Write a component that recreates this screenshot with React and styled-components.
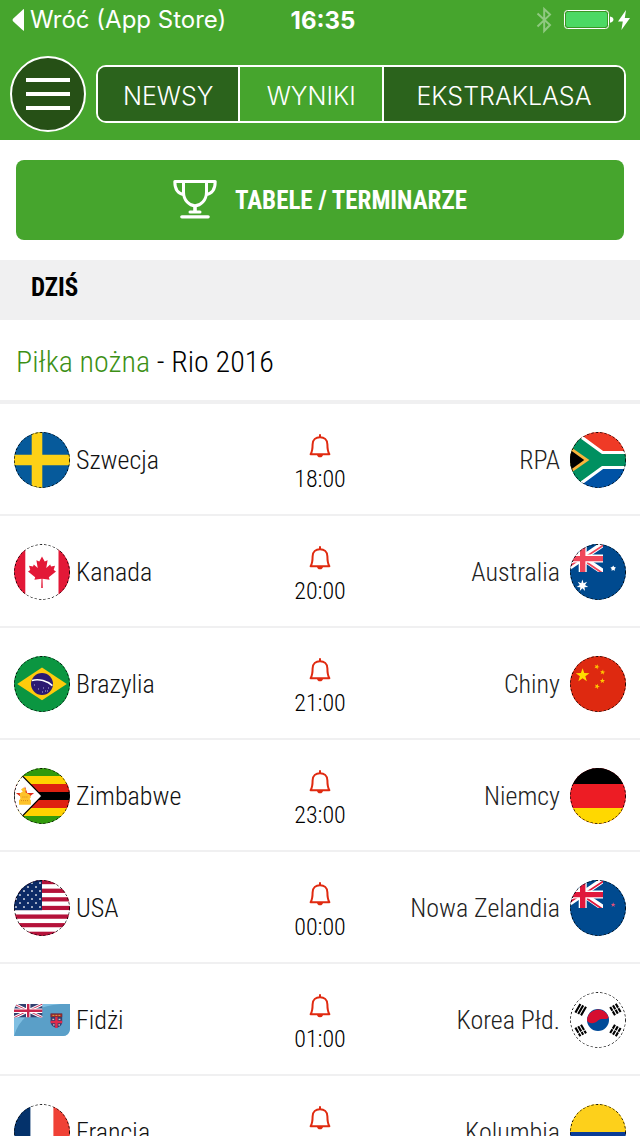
import { useState } from "react"
import styled, { createGlobalStyle } from "styled-components"

const GlobalStyle = createGlobalStyle`
    * {
        box-sizing: border-box;
    }

    body {
        margin: 0;
        background-color: #ffffff;
        color: #000000;
        font-family: "Roboto Condensed", Roboto, sans-serif;
        font-weight: 300;
    }

    button {
        padding: 0;
        border: none;
        background: none;
        font: inherit;
        color: inherit;
        cursor: pointer;
    }
`

const TopBar = styled.header`
    background-color: #46a52d;
    color: white;
    font-family: Inter, sans-serif;
    height: 140px;
`

const StatusBar = styled.div`
    display: grid;
    grid-template-columns: 1fr auto 1fr;
    align-items: center;
    height: 40px;
    padding: 0 10px 0 12px;
    font-size: 24px;
    line-height: 40px;
`

const BackLink = styled.a`
    display: flex;
    align-items: center;
    gap: 6px;
    color: white;
    text-decoration: none;
    font-weight: 400;
`

const Clock = styled.time`
    padding: 2px 0 0 4px;
    font-weight: 700;
    line-height: 38px;
`

const StatusIcons = styled.div`
    display: flex;
    justify-content: flex-end;
    align-items: center;
    gap: 4px;

    & svg:first-child {
        margin-right: 8px;
    }
`

const HeaderRow = styled.div`
    display: flex;
    align-items: center;
    gap: 10px;
    padding: 16px 14px 0 10px;
`

const MenuButton = styled.button`
    display: flex;
    flex-direction: column;
    justify-content: center;
    align-items: center;
    gap: 10px;
    flex: none;
    width: 76px;
    height: 76px;
    border: 2px solid white;
    border-radius: 50%;
    background-color: #265016;
`

const MenuLine = styled.span`
    width: 44px;
    height: 4px;
    background-color: white;
`

const Tabs = styled.nav`
    display: grid;
    grid-template-columns: 141fr 144fr 243fr;
    flex: 1;
    height: 58px;
    border: 2px solid white;
    border-radius: 10px;
    overflow: hidden;
`

const Tab = styled.button`
    padding-top: 4px;
    background-color: ${({$active}) => $active ? "#46a52d" : "#2b631c"};
    border-left: ${({$first}) => $first ? "none" : "2px solid white"};
    font-size: 25px;
    font-weight: 300;
    line-height: 50px;
`

const TablesArea = styled.div`
    padding: 20px 16px;
`

const TablesButton = styled.button`
    display: flex;
    justify-content: center;
    align-items: center;
    gap: 18px;
    width: 100%;
    height: 80px;
    border-radius: 8px;
    background-color: #46a52d;
    color: white;
    font-size: 25px;
    font-weight: 700;
    line-height: 30px;
`

const TablesLabel = styled.span`
    padding-top: 2px;
`

const DayTitle = styled.h2`
    margin: 0;
    padding: 0 31px;
    height: 60px;
    background-color: #f0f0f1;
    font-size: 25px;
    font-weight: 700;
    line-height: 56px;
`

const Competition = styled.h3`
    margin: 0;
    padding: 0 16px;
    border-bottom: 4px solid #f0f0f1;
    font-size: 30px;
    font-weight: 300;
    line-height: 84px;
    height: 84px;
`

const Discipline = styled.span`
    color: #3d9016;
`

const MatchList = styled.ul`
    list-style: none;
    margin: 0;
    padding: 0;
`

const Match = styled.li`
    display: grid;
    grid-template-columns: 1fr auto 1fr;
    height: 112px;
    padding: 0 14px;
    border-bottom: 2px solid #f0f0f1;
    font-size: 26px;
    line-height: 30px;
`

const Team = styled.div`
    display: flex;
    align-items: center;
    flex-direction: ${({$away}) => $away ? "row-reverse" : "row"};
    gap: ${({$away}) => $away ? "10px" : "6px"};
    color: ${({$away}) => $away ? "#222222" : "#111111"};
    padding-top: 2px;
`

const Kickoff = styled.div`
    display: flex;
    flex-direction: column;
    align-items: center;
    gap: 6px;
    padding-top: 30px;
    font-size: 24px;
`

const BellButton = styled.button`
    display: flex;
    color: #e02a10;
`

const FlagSvg = styled.svg`
    display: block;
    flex: none;
    width: 56px;
    height: 56px;
    border-radius: ${({$square}) => $square ? "0" : "50%"};
    overflow: hidden;
`

function starPoints(cx, cy, r, points = 5, inner = 0.4, turn = 0) {
    const list = []
    for (let i = 0; i < points * 2; i++) {
        const radius = i % 2 ? r * inner : r
        const angle = (Math.PI * i) / points - Math.PI / 2 + turn
        list.push(`${(cx + radius * Math.cos(angle)).toFixed(2)},${(cy + radius * Math.sin(angle)).toFixed(2)}`)
    }
    return list.join(" ")
}

function Star({x, y, r, points, inner, turn, ...rest}) {
    return <polygon points={starPoints(x, y, r, points, inner, turn)} {...rest}/>
}

function Stripes({colors, size = 56 / colors.length}) {
    return colors.map((color, i) => (
        <rect key={i} y={i * size} width="56" height={size + 0.3} fill={color}/>
    ))
}

// british canton, cut on the left by the round flag
function UnionJack({red}) {
    return (
        <svg x="0" y="0" width="33" height="28" viewBox="0 0 33 28">
            <rect width="33" height="28" fill="#004a8f"/>
            <path d="M-8 0L33 28M33 0L-8 28" stroke="white" strokeWidth="5.6"/>
            <path d="M-8 1.6L12 15M34 .8L14 14M12.5 13.4L-8 27.4M12.5 15.4L32 28.8" stroke={red} strokeWidth="1.8"/>
            <path d="M12.7 0V28M0 14.6H33" stroke="white" strokeWidth="8"/>
            <path d="M12.7 0V28M0 14.6H33" stroke={red} strokeWidth="5.4"/>
        </svg>
    )
}

const flags = {
    se: (
        <>
            <rect width="56" height="56" fill="#065a9b"/>
            <path d="M23 0V56M0 28H56" stroke="#fdd116" strokeWidth="10.6"/>
        </>
    ),
    za: (
        <>
            <rect width="56" height="28" fill="#ef3a26"/>
            <rect y="28" width="56" height="28" fill="#0052a5"/>
            <path d="M4 0L32.5 20.6H56V35.4H32.5L4 56H0V0Z" fill="#009060"/>
            <path d="M4 -.4L32.5 20.5H56M4 56.4L32.5 35.5H56" fill="none" stroke="white" strokeWidth="3.2"/>
            <path d="M0 14.6L19.4 28L0 41.4Z" fill="#fbb53c"/>
            <path d="M0 17.8L14.2 28L0 38.2Z" fill="#000000"/>
        </>
    ),
    ca: (
        <>
            <rect width="56" height="56" fill="white"/>
            <path d="M0 0H11.3V56H0ZM44.5 0H56V56H44.5Z" fill="#e31837"/>
            <path d="M28 12.5L30.7 17.6L33.6 16.2L32.3 24L36.2 20.4L37 22.5L41 21.8L39.7 26L42 27.4L34.8 33.2L35.6 35.8L28.5 34.8L28.8 44H27.2L27.5 34.8L20.4 35.8L21.2 33.2L14 27.4L16.3 26L15 21.8L19 22.5L19.8 20.4L23.7 24L22.4 16.2L25.3 17.6Z" fill="#e31837"/>
        </>
    ),
    au: (
        <>
            <rect width="56" height="56" fill="#004a8f"/>
            <UnionJack red="#f0465a"/>
            <Star x={12.4} y={41.6} r={6} points={7} inner={0.45} fill="white"/>
            <Star x={43.2} y={24.4} r={2.9} inner={0.55} fill="white"/>
        </>
    ),
    br: (
        <>
            <rect width="56" height="56" fill="#0b9641"/>
            <path d="M3.2 28L28 11.6L52.8 28L28 44.2Z" fill="#fecb0c"/>
            <circle cx="28" cy="28" r="11" fill="#2b1a72"/>
            <path d="M18 24.4C25 22.6 33.5 24.8 38.4 29.6" fill="none" stroke="white" strokeWidth="1.6"/>
            <path d="M20 29h1M24 33h1M29 32h1M31 35h1M34 32h1M28 36h1M33 35h1" stroke="#b7b2d8" strokeWidth="1"/>
        </>
    ),
    cn: (
        <>
            <rect width="56" height="56" fill="#de2910"/>
            <Star x={12.6} y={19.4} r={7.2} fill="#ffde00"/>
            <Star x={26.8} y={10.8} r={2.8} turn={0.4} fill="#ffc800"/>
            <Star x={32.6} y={16.2} r={2.8} turn={0.15} fill="#ffc800"/>
            <Star x={32.4} y={24.8} r={2.8} fill="#ffc800"/>
            <Star x={27} y={30.4} r={2.8} turn={0.4} fill="#ffc800"/>
        </>
    ),
    zw: (
        <>
            <Stripes colors={["#319a0c", "#ffd200", "#de2010", "#000000", "#de2010", "#ffd200", "#319a0c"]}/>
            <path d="M0 -.6L28 28L0 56.6Z" fill="white" stroke="black" strokeWidth="1.2"/>
            <Star x={11} y={28} r={9.6} fill="#e02a1a"/>
            <path d="M9.6 19.6L12 21.6L11.4 24.2L15.6 26.6L17 29L15.4 31.2L16.8 32V36.8H5V32.4L6.4 30.8L5.6 25.4L8.8 23.4L7 21.6Z" fill="#fdc22a"/>
            <path d="M7 32.6H15M8.4 29H13.4" stroke="#d98a1c" strokeWidth="1" strokeDasharray="1 1"/>
        </>
    ),
    de: (
        <>
            <rect width="56" height="56" fill="#ed1c24"/>
            <rect width="56" height="16" fill="#000000"/>
            <rect y="40" width="56" height="16" fill="#ffd800"/>
        </>
    ),
    us: (
        <>
            <Stripes colors={Array.from({length: 13}, (_, i) => i % 2 ? "#ffffff" : "#b5123a")}/>
            <rect width="28" height="30.2" fill="#0c2a66"/>
            {[4, 8, 12, 16, 20, 24, 28].map((y, row) => (
                [2, 10, 18, 26].map((x) => (
                    <Star key={`${x}-${y}`} x={x - (row % 2 ? 4 : 0)} y={y - 1} r={1.2} inner={0.6} fill="white"/>
                ))
            ))}
        </>
    ),
    nz: (
        <>
            <rect width="56" height="56" fill="#004a8f"/>
            <UnionJack red="#e0183c"/>
            <Star x={43.2} y={24.8} r={2.6} fill="#e0507a"/>
        </>
    ),
    fj: (
        <>
            <path d="M7 12H56V37Q55 44 49 44H0V19Q1 12 7 12Z" fill="#68afd8"/>
            <path d="M0 44Q6 14 48 12H56V37Q55 44 49 44Z" fill="#5a9fc8"/>
            <path d="M0 44V19Q1 12 7 12H46Q8 16 0 44Z" fill="#7fbfe2"/>
            <svg y="12" width="28.5" height="13.6" viewBox="0 0 28.5 13.6">
                <path d="M0 6Q1 0 6 0H28.5V13.6H0Z" fill="#33406f"/>
                <path d="M2 1L28.5 13.6M28.5 0L0 13.6" stroke="white" strokeWidth="3"/>
                <path d="M2 1L28.5 13.6M28.5 0L0 13.6" stroke="#c8345c" strokeWidth="1"/>
                <path d="M14.2 0V13.6M0 6.8H28.5" stroke="white" strokeWidth="4.4"/>
                <path d="M14.2 0V13.6M0 6.8H28.5" stroke="#c8244c" strokeWidth="2.4"/>
            </svg>
            <path d="M36.6 21.6H48.2V30Q48 34.4 42.4 36Q36.8 34.4 36.6 30Z" fill="#33406f"/>
            <path d="M36.6 21.6H48.2V25H36.6Z" fill="#8e2a30"/>
            <path d="M38.4 23.4H46.4" stroke="#e8a23c" strokeWidth="1" strokeDasharray="2 1"/>
            <path d="M42.4 25V36M36.6 30H48.2" stroke="#e02a4c" strokeWidth="2.4"/>
            <path d="M38.4 27.4H40.2M44.6 27.4H46.4M39 32.8H40.6M44.4 32.8H46" stroke="#e9b8b8" strokeWidth="1.2"/>
        </>
    ),
    kr: (
        <>
            <rect width="56" height="56" fill="white"/>
            <circle cx="28" cy="28" r="11" fill="#004a98"/>
            <path d="M17 28.6A11 11 0 0 1 38.6 25.6C37 28.6 31 25.4 28 28.6C24.4 32.2 19 32 17 28.6Z" fill="#d60e2f"/>
            <g stroke="black" strokeWidth="2.1">
                <path d="M5.4 20.6L10.4 12M8.2 22L13.2 13.4M11 23.4L16 14.8"/>
                <path d="M40.2 15L45 23.2M43 13.4L47.8 21.6M45.8 11.8L50.6 20" strokeDasharray="4.4 .7"/>
                <path d="M5.4 35.6L10.4 44.2M8.2 34.2L13.2 42.8M11 32.8L16 41.4" strokeDasharray="6 .8"/>
                <path d="M40.2 41L45 32.8M43 42.6L47.8 34.4M45.8 44.2L50.6 36" strokeDasharray="4.4 .7"/>
            </g>
        </>
    ),
    fr: (
        <>
            <rect width="56" height="56" fill="white"/>
            <rect width="16.4" height="56" fill="#04326b"/>
            <rect x="39.4" width="16.6" height="56" fill="#f04136"/>
        </>
    ),
    co: <Stripes colors={["#fdd01b", "#fdd01b", "#0a3c96", "#ce1126"]} size={14}/>,
}

function Flag({code}) {
    const square = code === "fj"

    return (
        <FlagSvg viewBox="0 0 56 56" $square={square} aria-hidden="true">
            {flags[code]}
            {!square && <circle cx="28" cy="28" r="27.6" fill="none" stroke="black" strokeWidth="1" strokeDasharray="2.4 2"/>}
        </FlagSvg>
    )
}

function BackIcon() {
    return (
        <svg width="12" height="22" viewBox="0 0 12 22" aria-hidden="true">
            <path d="M12 0V22Q11 21.6 10 20.6L1 12.2Q0 11 1 9.8L10 1.4Q11 .4 12 0Z" fill="white"/>
        </svg>
    )
}

function BluetoothIcon() {
    return (
        <svg width="16" height="28" viewBox="0 0 16 28" aria-hidden="true">
            <path d="M1.5 7.5L14 19L8.2 25V3L14 8.6L1.5 20.5" fill="none" stroke="#90c981" strokeWidth="2"/>
        </svg>
    )
}

function BatteryIcon() {
    return (
        <svg width="50" height="20" viewBox="0 0 50 20" aria-hidden="true">
            <rect x=".5" y=".5" width="44" height="18" rx="3" fill="#3c9526" stroke="white"/>
            <rect x="2" y="2" width="41" height="15" rx="2" fill="#4cd964"/>
            <path d="M46 6.4Q49.4 7 49.4 9.5T46 12.8Z" fill="white"/>
        </svg>
    )
}

function BoltIcon() {
    return (
        <svg width="12" height="20" viewBox="0 0 12 20" aria-hidden="true">
            <path d="M8 0L0 11.4H4.8L3.4 20L12 8H6.8Z" fill="white"/>
        </svg>
    )
}

function TrophyIcon() {
    return (
        <svg width="44" height="40" viewBox="0 0 44 40" aria-hidden="true">
            <g fill="none" stroke="white" strokeWidth="3" strokeLinejoin="round">
                <path d="M10.5 1.6H33.5V12C33.5 20.5 27.5 25.8 22 25.8S10.5 20.5 10.5 12Z"/>
                <path d="M10 1.6H1.8C1.8 9 4 13.6 10.8 14.6M34 1.6H42.2C42.2 9 40 13.6 33.2 14.6"/>
                <path d="M22 26V31.4" strokeWidth="3.6"/>
                <path d="M17 32H27" strokeLinecap="round"/>
                <path d="M8.8 36.8H35.2" strokeWidth="3.2" strokeLinecap="round"/>
            </g>
        </svg>
    )
}

function BellIcon() {
    return (
        <svg width="22" height="24" viewBox="0 0 22 24" aria-hidden="true">
            <path d="M1.6 20.2C3.2 17.6 3.6 14.6 3.6 10.4C3.6 5.4 7 3.2 11 3.2S18.4 5.4 18.4 10.4C18.4 14.6 18.8 17.6 20.4 20.2Z" fill="none" stroke="currentColor" strokeWidth="2" strokeLinejoin="round"/>
            <path d="M11 1V3" stroke="currentColor" strokeWidth="2" strokeLinecap="round"/>
            <path d="M8 20.4Q8.2 23.2 11 23.2T14 20.4Z" fill="currentColor"/>
        </svg>
    )
}

const tabs = ["NEWSY", "WYNIKI", "EKSTRAKLASA"]

const matches = [
    {home: ["Szwecja", "se"], away: ["RPA", "za"], time: "18:00"},
    {home: ["Kanada", "ca"], away: ["Australia", "au"], time: "20:00"},
    {home: ["Brazylia", "br"], away: ["Chiny", "cn"], time: "21:00"},
    {home: ["Zimbabwe", "zw"], away: ["Niemcy", "de"], time: "23:00"},
    {home: ["USA", "us"], away: ["Nowa Zelandia", "nz"], time: "00:00"},
    {home: ["Fidżi", "fj"], away: ["Korea Płd.", "kr"], time: "01:00"},
    {home: ["Francja", "fr"], away: ["Kolumbia", "co"], time: "03:00"},
]

export default function App() {
    const [active, setActive] = useState("WYNIKI")

    return (
        <>
            <GlobalStyle/>
            <TopBar>
                <StatusBar>
                    <BackLink href="#">
                        <BackIcon/>
                        Wróć (App Store)
                    </BackLink>
                    <Clock>16:35</Clock>
                    <StatusIcons>
                        <BluetoothIcon/>
                        <BatteryIcon/>
                        <BoltIcon/>
                    </StatusIcons>
                </StatusBar>
                <HeaderRow>
                    <MenuButton aria-label="Menu">
                        <MenuLine/>
                        <MenuLine/>
                        <MenuLine/>
                    </MenuButton>
                    <Tabs>
                        {tabs.map((tab, i) => (
                            <Tab key={tab} $active={tab === active} $first={i === 0} onClick={() => setActive(tab)}>
                                {tab}
                            </Tab>
                        ))}
                    </Tabs>
                </HeaderRow>
            </TopBar>

            <main>
                <TablesArea>
                    <TablesButton>
                        <TrophyIcon/>
                        <TablesLabel>TABELE / TERMINARZE</TablesLabel>
                    </TablesButton>
                </TablesArea>

                <DayTitle>DZIŚ</DayTitle>
                <Competition>
                    <Discipline>Piłka nożna</Discipline> - Rio 2016
                </Competition>

                <MatchList>
                    {matches.map(({home, away, time}) => (
                        <Match key={home[1]}>
                            <Team>
                                <Flag code={home[1]}/>
                                {home[0]}
                            </Team>
                            <Kickoff>
                                <BellButton aria-label="Powiadom">
                                    <BellIcon/>
                                </BellButton>
                                <time>{time}</time>
                            </Kickoff>
                            <Team $away>
                                <Flag code={away[1]}/>
                                {away[0]}
                            </Team>
                        </Match>
                    ))}
                </MatchList>
            </main>
        </>
    )
}
